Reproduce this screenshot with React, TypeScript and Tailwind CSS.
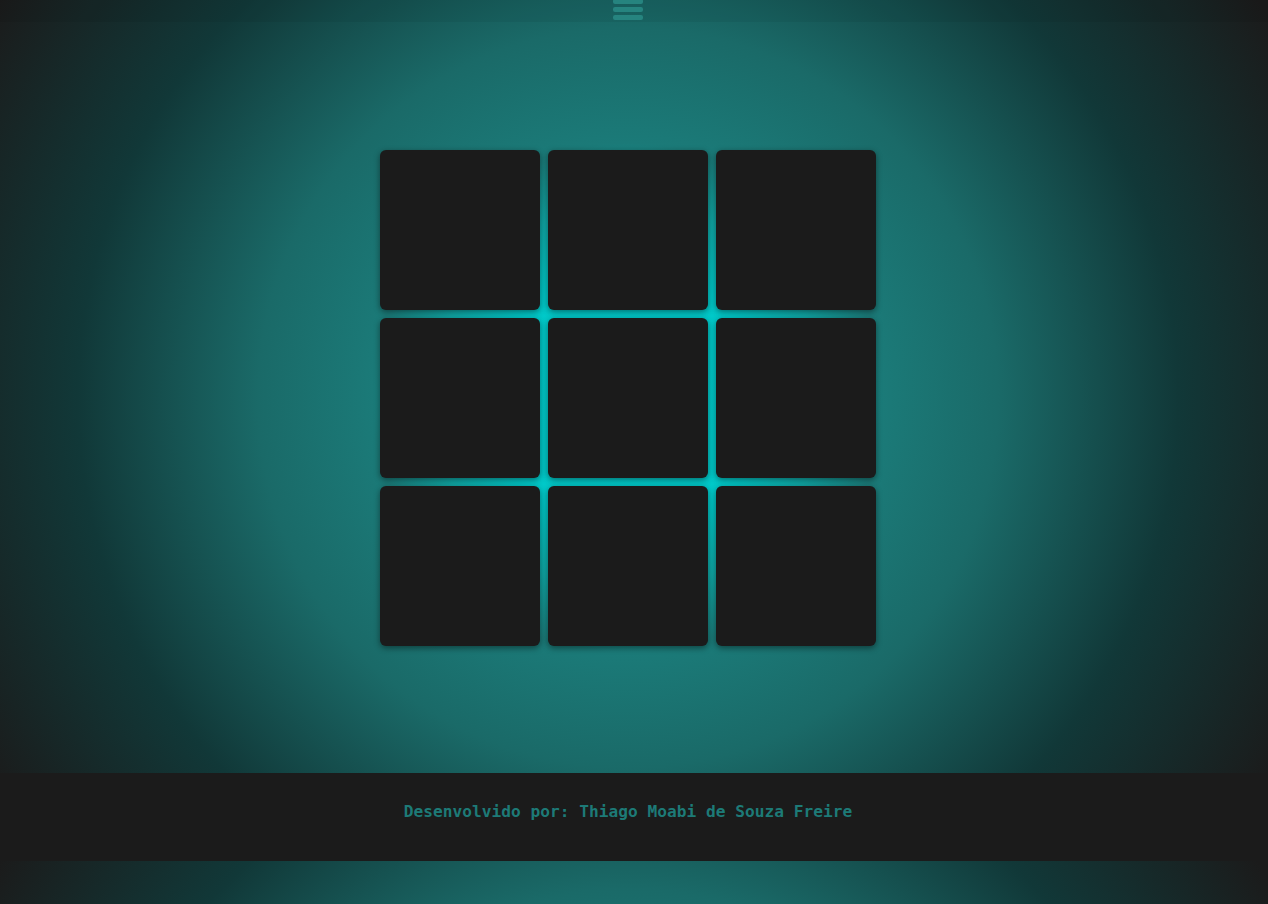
export default function App() {
  const cells = Array.from({ length: 9 }, (_, i) => i);

  return (
    <div className="h-[904px] w-full overflow-hidden bg-[#1b1b1b] bg-[radial-gradient(circle_at_628px_398px,#00cccc_0px,#00c8c8_130px,#10a6a4_195px,#1b7a78_255px,#1a6a68_370px,#113838_550px,#1b1b1b_745px)] bg-[length:100%_861px] bg-repeat-y">
      {/* Top bar */}
      <header className="h-[22px] bg-black/5 pr-[12px] flex justify-center">
        <button className="flex flex-col gap-[3px] mt-[-1px]" aria-label="menu">
          <span className="block w-[30px] h-[5px] rounded-[2px] bg-[#26847f]" />
          <span className="block w-[30px] h-[5px] rounded-[2px] bg-[#26847f]" />
          <span className="block w-[30px] h-[5px] rounded-[2px] bg-[#26847f]" />
        </button>
      </header>

      {/* Board */}
      <main className="h-[751px] pr-[12px] flex items-center justify-center">
        <div className="grid grid-cols-[160px_160px_160px] gap-[8px] mt-[1px]">
          {cells.map((c) => (
            <div
              key={c}
              className="w-[160px] h-[160px] rounded-[6px] bg-[#1b1b1b] shadow-[0_2px_6px_rgba(0,0,0,0.45)]"
            />
          ))}
        </div>
      </main>

      {/* Footer */}
      <footer className="h-[88px] bg-[#1b1b1b] pr-[12px] pb-[10px] flex items-center justify-center">
        <p className="font-['DejaVu_Sans_Mono',monospace] font-bold text-[16.2px] text-[#1d7a77]">
          Desenvolvido por: Thiago Moabi de Souza Freire
        </p>
      </footer>
    </div>
  );
}
